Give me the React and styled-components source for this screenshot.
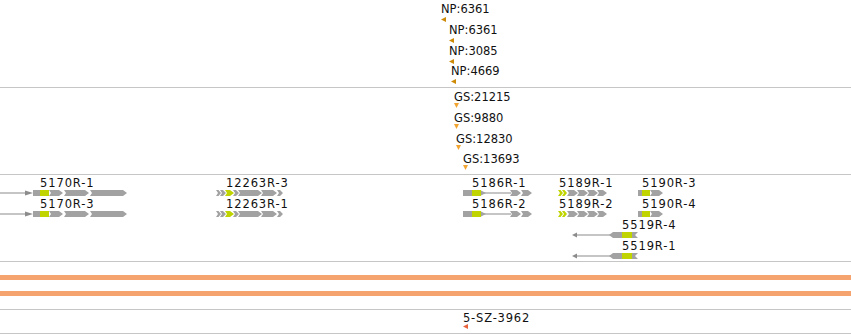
import React from 'react';
import styled, { createGlobalStyle } from 'styled-components';

const GRAY = '#a2a2a2';
const LIME = '#bfd400';
const LINE = '#8c8c8c';

const Global = createGlobalStyle`
  html, body { margin: 0; padding: 0; background: #fff; }
  body { font-family: "DejaVu Sans", "Noto Sans", sans-serif; }
`;

const Browser = styled.div`
  width: 851px;
  height: 334px;
  overflow: hidden;
  display: flex;
  flex-direction: column;
  background: #fff;
`;

const Track = styled.div`
  position: relative;
  flex: none;
  height: ${(p) => p.$h}px;
  border-bottom: 1px solid #c6c6c6;
`;

const BarTrack = styled.div`
  flex: none;
  height: 34px;
  padding-top: 13px;
  display: flex;
  flex-direction: column;
  gap: 11px;
  border-bottom: 1px solid #c6c6c6;
`;

const CoverageBar = styled.div`
  height: 5px;
  background: #f5a46f;
`;

const Feature = styled.div`
  position: absolute;
  left: ${(p) => p.$x}px;
  top: ${(p) => p.$y}px;
  display: flex;
  flex-direction: column;
  align-items: flex-start;
`;

const Label = styled.span`
  font-size: 11.5px;
  line-height: 12px;
  color: #111;
  white-space: nowrap;
  letter-spacing: ${(p) => p.$spacing || 0}px;
  padding-left: ${(p) => p.$indent || 0}px;
`;

const Glyph = styled.svg`
  display: block;
  overflow: visible;
  margin-top: ${(p) => p.$gap || 0}px;
`;

function Point({ x, y, label, dir, color, gap, spacing }) {
  return (
    <Feature $x={x} $y={y}>
      <Label $spacing={spacing}>{label}</Label>
      <Glyph width="5" height="5" $gap={gap}>
        <polygon
          points={dir === 'down' ? '0,0 5,0 2.5,5' : '0,2.5 5,0 5,5'}
          fill={color}
        />
      </Glyph>
    </Feature>
  );
}

const H = 6;

function part(p, x0, i) {
  const a = p.a - x0;
  const b = p.b - x0;
  switch (p.t) {
    case 'line':
      return <rect key={i} x={a} y={2.5} width={b - a} height={1} fill={LINE} />;
    case 'triR':
      return <polygon key={i} points={`${a},0.5 ${b},3 ${a},5.5`} fill={p.c || LINE} />;
    case 'triL':
      return <polygon key={i} points={`${b},0.5 ${a},3 ${b},5.5`} fill={p.c || LINE} />;
    case 'rect':
      return <rect key={i} x={a} y={0} width={b - a} height={H} fill={p.c} />;
    case 'pentR': {
      const tip = Math.min(4, (b - a) / 2);
      return (
        <polygon
          key={i}
          points={`${a},0 ${b - tip},0 ${b},3 ${b - tip},6 ${a},6 ${a + 2},3`}
          fill={p.c}
        />
      );
    }
    case 'pentL': {
      const tip = Math.min(4, (b - a) / 2);
      return (
        <polygon key={i} points={`${a + tip},0 ${b},0 ${b},6 ${a + tip},6 ${a},3`} fill={p.c} />
      );
    }
    case 'chevL':
      return (
        <polygon key={i} points={`${a},0 ${b},0 ${b - 3},3 ${b},6 ${a},6`} fill={p.c} />
      );
    default:
      return null;
  }
}

function Gene({ label, labelX, x0, x1, top, parts }) {
  return (
    <Feature $x={x0} $y={top}>
      <Label $indent={labelX - x0} $spacing={0.9}>
        {label}
      </Label>
      <Glyph width={x1 - x0} height={H} $gap={1}>
        {parts.map((p, i) => part(p, x0, i))}
      </Glyph>
    </Feature>
  );
}

const g5170 = {
  x0: 0,
  x1: 127,
  labelX: 40,
  parts: [
    { t: 'line', a: 0, b: 30 },
    { t: 'triR', a: 25, b: 33 },
    { t: 'rect', a: 33, b: 40, c: GRAY },
    { t: 'rect', a: 40, b: 49, c: LIME },
    { t: 'pentR', a: 49, b: 63, c: GRAY },
    { t: 'pentR', a: 64, b: 89, c: GRAY },
    { t: 'pentR', a: 90, b: 127, c: GRAY },
  ],
};

const g12263 = {
  x0: 216,
  x1: 283,
  labelX: 226,
  parts: [
    { t: 'pentR', a: 216, b: 221, c: GRAY },
    { t: 'pentR', a: 220, b: 226, c: GRAY },
    { t: 'pentR', a: 225, b: 234, c: LIME },
    { t: 'pentR', a: 233, b: 239, c: GRAY },
    { t: 'pentR', a: 238, b: 262, c: GRAY },
    { t: 'pentR', a: 261, b: 277, c: GRAY },
    { t: 'pentR', a: 277, b: 283, c: GRAY },
  ],
};

const g5186 = {
  x0: 463,
  x1: 532,
  labelX: 472,
  parts: [
    { t: 'line', a: 481, b: 511 },
    { t: 'rect', a: 463, b: 472, c: GRAY },
    { t: 'rect', a: 472, b: 481, c: LIME },
    { t: 'triR', a: 481, b: 486, c: GRAY },
    { t: 'pentR', a: 510, b: 521, c: GRAY },
    { t: 'pentR', a: 521, b: 532, c: GRAY },
  ],
};

const g5189 = {
  x0: 558,
  x1: 607,
  labelX: 559,
  parts: [
    { t: 'pentR', a: 558, b: 563, c: LIME },
    { t: 'pentR', a: 562, b: 567, c: LIME },
    { t: 'pentR', a: 567, b: 578, c: GRAY },
    { t: 'pentR', a: 577, b: 588, c: GRAY },
    { t: 'pentR', a: 587, b: 598, c: GRAY },
    { t: 'pentR', a: 597, b: 607, c: GRAY },
  ],
};

const g5190 = {
  x0: 638,
  x1: 663,
  labelX: 642,
  parts: [
    { t: 'rect', a: 638, b: 642, c: GRAY },
    { t: 'rect', a: 642, b: 650, c: LIME },
    { t: 'pentR', a: 650, b: 663, c: GRAY },
  ],
};

const g5519 = {
  x0: 572,
  x1: 638,
  labelX: 622,
  parts: [
    { t: 'line', a: 575, b: 612 },
    { t: 'triL', a: 572, b: 577 },
    { t: 'pentL', a: 609, b: 622, c: GRAY },
    { t: 'rect', a: 622, b: 632, c: LIME },
    { t: 'chevL', a: 632, b: 638, c: GRAY },
  ],
};

const genes = [
  { label: '5170R-1', top: 2, ...g5170 },
  { label: '5170R-3', top: 23, ...g5170 },
  { label: '12263R-3', top: 2, ...g12263 },
  { label: '12263R-1', top: 23, ...g12263 },
  { label: '5186R-1', top: 2, ...g5186 },
  { label: '5186R-2', top: 23, ...g5186 },
  { label: '5189R-1', top: 2, ...g5189 },
  { label: '5189R-2', top: 23, ...g5189 },
  { label: '5190R-3', top: 2, ...g5190 },
  { label: '5190R-4', top: 23, ...g5190 },
  { label: '5519R-4', top: 44, ...g5519 },
  { label: '5519R-1', top: 65, ...g5519 },
];

const npFeatures = [
  { label: 'NP:6361', x: 441, y: 3 },
  { label: 'NP:6361', x: 449, y: 24 },
  { label: 'NP:3085', x: 449, y: 45 },
  { label: 'NP:4669', x: 451, y: 65 },
];

const gsFeatures = [
  { label: 'GS:21215', x: 454, y: 3 },
  { label: 'GS:9880', x: 454, y: 24 },
  { label: 'GS:12830', x: 456, y: 45 },
  { label: 'GS:13693', x: 463, y: 65 },
];

export default function App() {
  return (
    <>
      <Global />
      <Browser>
        <Track $h={87}>
          {npFeatures.map((f, i) => (
            <Point key={i} {...f} dir="left" color="#cc8a06" gap={2} />
          ))}
        </Track>
        <Track $h={86}>
          {gsFeatures.map((f, i) => (
            <Point key={i} {...f} dir="down" color="#f2a531" gap={0} />
          ))}
        </Track>
        <Track $h={86}>
          {genes.map((g, i) => (
            <Gene key={i} {...g} />
          ))}
        </Track>
        <BarTrack>
          <CoverageBar />
          <CoverageBar />
        </BarTrack>
        <Track $h={23}>
          <Point
            label="5-SZ-3962"
            x={463}
            y={2}
            dir="left"
            color="#e8623c"
            gap={0}
            spacing={0.8}
          />
        </Track>
      </Browser>
    </>
  );
}
